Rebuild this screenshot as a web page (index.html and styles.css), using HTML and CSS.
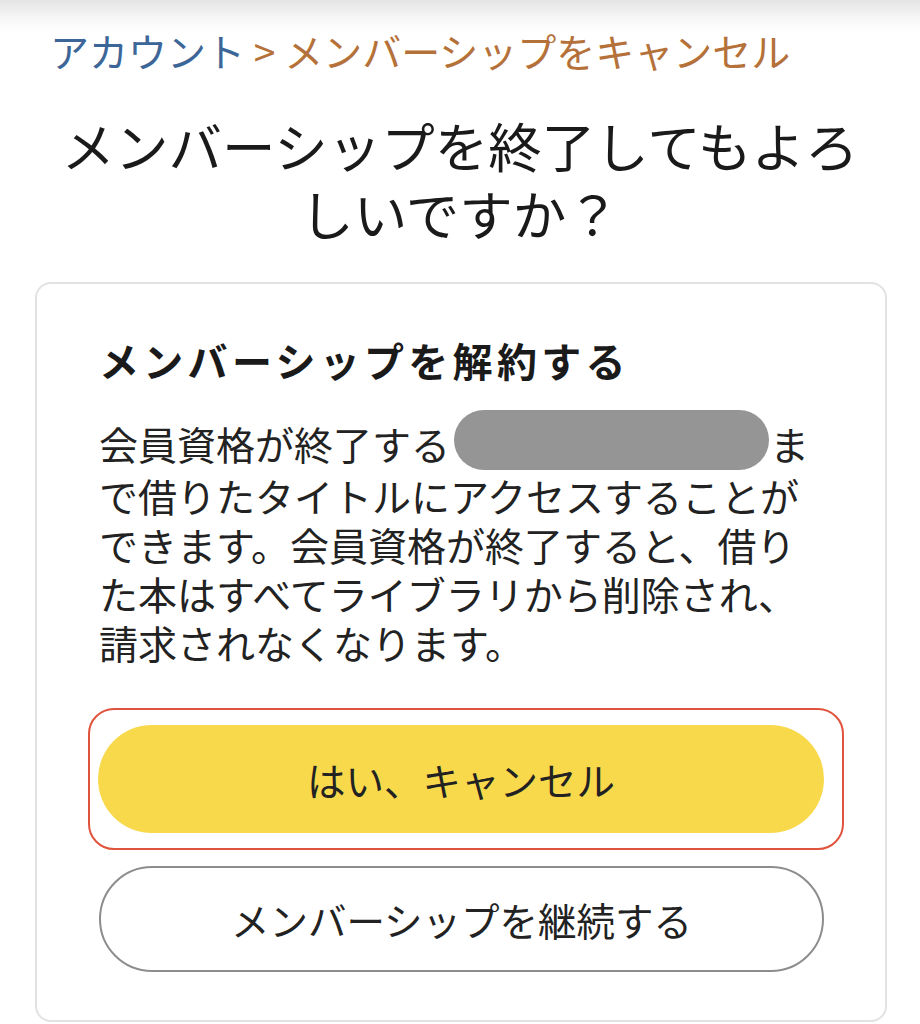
FILE: index.html
```html
<!DOCTYPE html>
<html lang="ja">
<head>
    <meta charset="UTF-8"/>
    <meta content="width=device-width, initial-scale=1.0" name="viewport"/>
    <title>メンバーシップをキャンセル</title>
    <link rel="stylesheet" href="styles.css">
</head>
<body>
<div class="topbar">
    <nav class="breadcrumb">
        <a class="crumb-link" href="#">アカウント</a>
        <span class="crumb-current">&gt; メンバーシップをキャンセル</span>
    </nav>
</div>

<h1 class="page-title">メンバーシップを終了してもよろしいですか？</h1>

<div class="cancel-card">
    <h2 class="card-title">メンバーシップを解約する</h2>

    <p class="card-text">
        会員資格が終了する<span class="redacted"></span>まで借りたタイトルにアクセスすることができます。会員資格が終了すると、借りた本はすべてライブラリから削除され、請求されなくなります。
    </p>

    <div class="focus-ring">
        <button class="confirm-button" type="button">はい、キャンセル</button>
    </div>

    <button class="keep-button" type="button">メンバーシップを継続する</button>
</div>
</body>
</html>
```

FILE: styles.css
```css
/* Base styles */
body {
    margin: 0;
    padding: 0;
    font-family: "Noto Sans CJK JP", sans-serif;
    background-color: #ffffff;
    color: #1b1b1b;
}

/* Header shade + breadcrumb */
.topbar {
    padding: 26px 50px 0;
    background: linear-gradient(to bottom, #e4e4e4 0, #f6f6f6 18px, #ffffff 32px);
}

.breadcrumb {
    font-size: 39px;
    line-height: 48px;
    white-space: nowrap;
}

.crumb-link {
    color: #3d6698;
    text-decoration: none;
}

.crumb-current {
    color: #b5713a;
}

/* Page title */
.page-title {
    margin: 37px 40px 0;
    font-size: 53.5px;
    font-weight: 400;
    line-height: 68px;
    text-align: center;
    color: #1a1a1a;
}

/* Card */
.cancel-card {
    margin: 35px 33px 0 35px;
    padding: 50px 61px 48px 62px;
    border: 2px solid #e2e2e2;
    border-radius: 16px;
}

.card-title {
    margin: 0;
    font-size: 40px;
    font-weight: 700;
    letter-spacing: 4.3px;
    line-height: 52px;
    color: #1a1a1a;
}

.card-text {
    margin: 33px 0 0;
    font-size: 39px;
    line-height: 49px;
    color: #222222;
}

/* Hidden date */
.redacted {
    display: inline-block;
    width: 315px;
    height: 60px;
    margin: -17px 1px 1px 4px;
    vertical-align: middle;
    background-color: #959595;
    border-radius: 30px;
}

/* Buttons */
.focus-ring {
    margin: 41px -20px 0 -11px;
    padding: 15px 18px 15px 8px;
    border: 2px solid #e0533c;
    border-radius: 26px;
}

.confirm-button,
.keep-button {
    display: block;
    width: 100%;
    font-family: "Noto Sans CJK JP", sans-serif;
    font-size: 38.5px;
    color: #222222;
    cursor: pointer;
}

.confirm-button {
    height: 108px;
    border: none;
    border-radius: 54px;
    background-color: #f8d94c;
}

.keep-button {
    height: 106px;
    margin-top: 16px;
    border: 2px solid #8d8d8d;
    border-radius: 53px;
    background-color: #ffffff;
}
```
